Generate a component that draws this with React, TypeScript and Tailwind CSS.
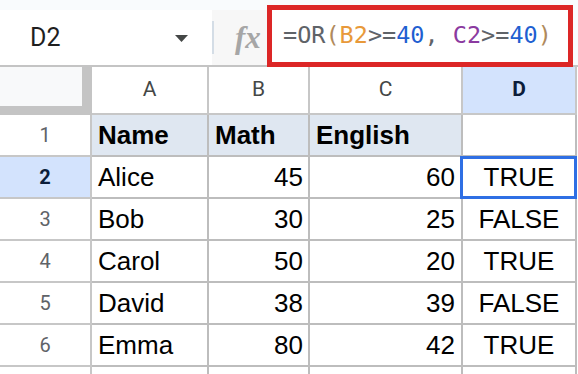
import React from "react";

const rows = [
  { n: "1", a: "Name", b: "Math", c: "English", d: "", header: true },
  { n: "2", a: "Alice", b: "45", c: "60", d: "TRUE" },
  { n: "3", a: "Bob", b: "30", c: "25", d: "FALSE" },
  { n: "4", a: "Carol", b: "50", c: "20", d: "TRUE" },
  { n: "5", a: "David", b: "38", c: "39", d: "FALSE" },
  { n: "6", a: "Emma", b: "80", c: "42", d: "TRUE" },
];

const cellFont = { fontFamily: '"Liberation Sans", Arial, sans-serif' };
const uiFont = { fontFamily: 'Roboto, "Liberation Sans", sans-serif' };

export default function App() {
  return (
    <div className="w-[578px] h-[374px] overflow-hidden bg-white relative">
      {/* toolbar */}
      <div className="flex h-[65px] bg-[#f9fbfd]">
        <div className="mt-[10px] h-[55px] w-[212px] bg-white flex items-center pl-[30px] pr-[24px] justify-between">
          <span className="text-[25px] text-[#1f1f1f]" style={uiFont}>D2</span>
          <svg width="13" height="7" viewBox="0 0 13 7" className="mt-[2px]">
            <path d="M0 0 L13 0 L6.5 7 Z" fill="#444746" />
          </svg>
        </div>
        <div className="mt-[10px] h-[55px] w-[55px] bg-[#f7f7f7] flex items-center">
          <div className="w-[2px] h-[33px] bg-[#d4dde6]" />
          <span
            className="ml-[21px] text-[31px] italic font-bold text-[#a6a6a6] leading-none"
            style={{ fontFamily: '"Liberation Serif", "DejaVu Serif", serif' }}
          >
            fx
          </span>
        </div>
        <div className="relative z-10 mt-[5px] mb-[-2px] h-[62px] w-[306px] border-[5px] border-[#dc2626] bg-white flex items-center pl-[11px]">
          <span
            className="text-[23.5px] leading-none whitespace-pre text-[#5f6368]"
            style={{ fontFamily: '"DejaVu Sans Mono", "Liberation Mono", monospace' }}
          >
            <span>=OR</span>
            <span className="text-[#b08a5c]">(</span>
            <span className="text-[#e8993a]">B2</span>
            <span>&gt;=</span>
            <span className="text-[#1f5fd1]">40</span>
            <span>, </span>
            <span className="text-[#8b3aa0]">C2</span>
            <span>&gt;=</span>
            <span className="text-[#1f5fd1]">40</span>
            <span className="text-[#b08a5c]">)</span>
          </span>
        </div>
      </div>

      {/* column header row */}
      <div className="flex h-[50px] border-t-2 border-[#c4c4c4]" style={uiFont}>
        <div className="w-[92px] h-[48px] bg-[#c4c4c4] border-r-2 border-[#c4c4c4]">
          <div className="w-[82px] h-[39px] bg-[#f8f9fa]" />
        </div>
        {[
          { l: "A", w: "w-[117px]" },
          { l: "B", w: "w-[101px]" },
          { l: "C", w: "w-[153px]" },
        ].map((c) => (
          <div
            key={c.l}
            className={`${c.w} h-[48px] border-r-2 border-b-2 border-[#c7c7c7] bg-white flex items-center justify-center text-[21px] text-[#444746]`}
          >
            {c.l}
          </div>
        ))}
        <div className="w-[114px] h-[48px] border-r-2 border-b-2 border-[#c7c7c7] bg-[#d3e3fd] flex items-center justify-center text-[21px] font-bold text-[#0b1d3a]">
          D
        </div>
      </div>

      {/* data rows */}
      {rows.map((r) => {
        const sel = r.n === "2";
        return (
          <div key={r.n} className="flex h-[42px]">
            <div
              className={`w-[92px] h-[42px] border-r-2 border-b-2 border-[#c7c7c7] flex items-center justify-center text-[20px] ${
                sel ? "bg-[#d3e3fd] font-bold text-[#0b1d3a]" : "bg-white text-[#5f6368]"
              }`}
              style={uiFont}
            >
              {r.n}
            </div>
            <div
              className={`w-[117px] h-[42px] border-r-2 border-b-2 border-[#bdbdbd] flex items-center pl-[6px] text-[26px] text-black ${
                r.header ? "bg-[#dfe7f1] font-bold" : "bg-white"
              }`}
              style={cellFont}
            >
              {r.a}
            </div>
            <div
              className={`w-[101px] h-[42px] border-r-2 border-b-2 border-[#bdbdbd] flex items-center text-[26px] text-black ${
                r.header ? "bg-[#dfe7f1] font-bold pl-[6px]" : "bg-white justify-end pr-[5px]"
              }`}
              style={cellFont}
            >
              {r.b}
            </div>
            <div
              className={`w-[153px] h-[42px] border-r-2 border-b-2 border-[#bdbdbd] flex items-center text-[26px] text-black ${
                r.header ? "bg-[#dfe7f1] font-bold pl-[6px]" : "bg-white justify-end pr-[6px]"
              }`}
              style={cellFont}
            >
              {r.c}
            </div>
            <div
              className="relative w-[114px] h-[42px] border-r-2 border-b-2 border-[#bdbdbd] bg-white flex items-center justify-center text-[26px] text-black"
              style={cellFont}
            >
              {r.d}
              {sel && (
                <div className="absolute left-[-3px] top-[-1px] right-[-2px] bottom-[-2px] border-[3px] border-[#2f6fe4]" />
              )}
            </div>
          </div>
        );
      })}

      {/* partial row 7 */}
      <div className="flex h-[10px]">
        <div className="w-[92px] h-[10px] border-r-2 border-[#c7c7c7] bg-white" />
        <div className="w-[117px] h-[10px] border-r-2 border-[#bdbdbd] bg-white" />
        <div className="w-[101px] h-[10px] border-r-2 border-[#bdbdbd] bg-white" />
        <div className="w-[153px] h-[10px] border-r-2 border-[#bdbdbd] bg-white" />
        <div className="w-[114px] h-[10px] border-r-2 border-[#bdbdbd] bg-white" />
      </div>
    </div>
  );
}
